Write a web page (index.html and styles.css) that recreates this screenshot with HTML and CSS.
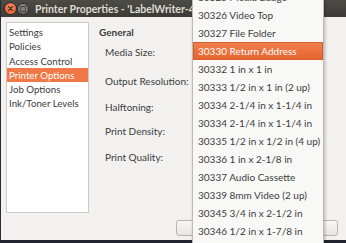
FILE: index.html
```html
<!DOCTYPE html>
<html lang="en">
<head>
  <meta charset="UTF-8">
  <title>Printer Properties</title>
  <link rel="stylesheet" href="styles.css">
</head>
<body>
  <div class="window">
    <!-- Title bar -->
    <header class="titlebar">
      <span class="btn-close">
        <svg width="11" height="11" viewBox="0 0 11 11"><path d="M3.6 3.6 L7.4 7.4 M7.4 3.6 L3.6 7.4" stroke="#3a2a22" stroke-width="1.3" stroke-linecap="round"/></svg>
      </span>
      <span class="btn-min"><span class="btn-min-inner"></span></span>
      <span class="title">Printer Properties - 'LabelWriter-450'</span>
    </header>

    <main class="body">
      <ul class="sidebar">
        <li>Settings</li>
        <li>Policies</li>
        <li>Access Control</li>
        <li class="active">Printer Options</li>
        <li>Job Options</li>
        <li>Ink/Toner Levels</li>
      </ul>

      <section class="panel">
        <h2>General</h2>
        <div class="options">
          <span>Media Size:</span>
          <span>Output Resolution:</span>
          <span>Halftoning:</span>
          <span>Print Density:</span>
          <span>Print Quality:</span>
        </div>
      </section>
    </main>

    <footer class="actions">
      <button>Cancel</button>
      <button>OK</button>
    </footer>

    <!-- Open media size dropdown -->
    <ul class="menu">
      <li>30325 Media Badge</li>
      <li>30326 Video Top</li>
      <li>30327 File Folder</li>
      <li class="selected">30330 Return Address</li>
      <li>30332 1 in x 1 in</li>
      <li>30333 1/2 in x 1 in (2 up)</li>
      <li>30334 2-1/4 in x 1-1/4 in</li>
      <li>30334 2-1/4 in x 1-1/4 in</li>
      <li>30335 1/2 in x 1/2 in (4 up)</li>
      <li>30336 1 in x 2-1/8 in</li>
      <li>30337 Audio Cassette</li>
      <li>30339 8mm Video (2 up)</li>
      <li>30345 3/4 in x 2-1/2 in</li>
      <li>30346 1/2 in x 1-7/8 in</li>
      <li>30347 1 in x 1-1/2 in</li>
    </ul>
  </div>
</body>
</html>
```

FILE: styles.css
```css
body {
  margin: 0;
  width: 346px;
  height: 243px;
  overflow: hidden;
  font-family: Lato, 'Liberation Sans', sans-serif;
  font-size: 10px;
  color: #3c3c3c;
}

.window {
  position: relative;
  height: 240px;
  background-color: #f2f1f0;
  border-left: 1px solid #2a2c38;
  border-bottom: 3px solid #23252f;
  display: flex;
  flex-direction: column;
}

/* Title bar */
.titlebar {
  height: 17px;
  background: linear-gradient(#4c4b46, #3c3b37);
  display: flex;
  align-items: center;
  padding-left: 4px;
}

.btn-close {
  width: 11px;
  height: 11px;
  border-radius: 50%;
  background: radial-gradient(circle at 50% 35%, #f78a5c, #e2542a);
  box-shadow: 0 0 0 1px #2e2d2a;
  display: flex;
}

.btn-min {
  width: 10px;
  height: 10px;
  margin-left: 2px;
  border-radius: 50%;
  background: linear-gradient(#8a8984, #6e6d68);
  box-shadow: 0 0 0 1px #2e2d2a;
  display: flex;
  align-items: center;
  justify-content: center;
}

.btn-min-inner {
  width: 4px;
  height: 4px;
  border: 1px solid #4a4945;
  background: #7d7c77;
}

.title {
  margin-left: 7px;
  color: #dfdbd2;
  font-weight: bold;
  font-size: 10.5px;
  white-space: nowrap;
}

/* Content */
.body {
  display: flex;
  padding: 5px 0 0 5px;
}

.sidebar {
  list-style: none;
  margin: 0;
  padding: 2px 0 0 0;
  width: 81px;
  height: 187px;
  background: white;
  border: 1px solid #cdcac5;
  font-size: 9.7px;
}

.sidebar li {
  height: 14.3px;
  line-height: 14.3px;
  padding-left: 2px;
}

.sidebar li.active {
  background-color: #f07746;
  color: white;
}

.panel {
  padding: 4px 0 0 10px;
}

.panel h2 {
  margin: 0;
  font-size: 10px;
  line-height: 12px;
  font-weight: bold;
}

.options {
  display: grid;
  grid-template-rows: 29px 26px 24px 26px auto;
  margin: 8px 0 0 6px;
  line-height: 12px;
}

/* Bottom buttons */
.actions {
  display: flex;
  justify-content: flex-end;
  gap: 6px;
  padding: 7px 8px 0 0;
}

.actions button {
  width: 78px;
  height: 16px;
  border: 1px solid #b9b6b1;
  border-radius: 3px;
  background: linear-gradient(#f9f8f7, #e6e5e3);
  font-family: inherit;
  font-size: 10px;
  color: #3c3c3c;
}

/* Dropdown menu */
.menu {
  position: absolute;
  top: -13px;
  left: 191px;
  width: 130px;
  margin: 0;
  padding: 0;
  list-style: none;
  background: #f8f8f7;
  border: 1px solid #bdbab5;
  box-shadow: 1px 0 3px rgba(0,0,0,0.25);
}

.menu li {
  height: 18px;
  line-height: 18px;
  padding-left: 5px;
  white-space: nowrap;
}

.menu li.selected {
  background: linear-gradient(#f2804f, #e4632d);
  box-shadow: inset 0 0 0 1px #d6602d;
  color: white;
}
```
